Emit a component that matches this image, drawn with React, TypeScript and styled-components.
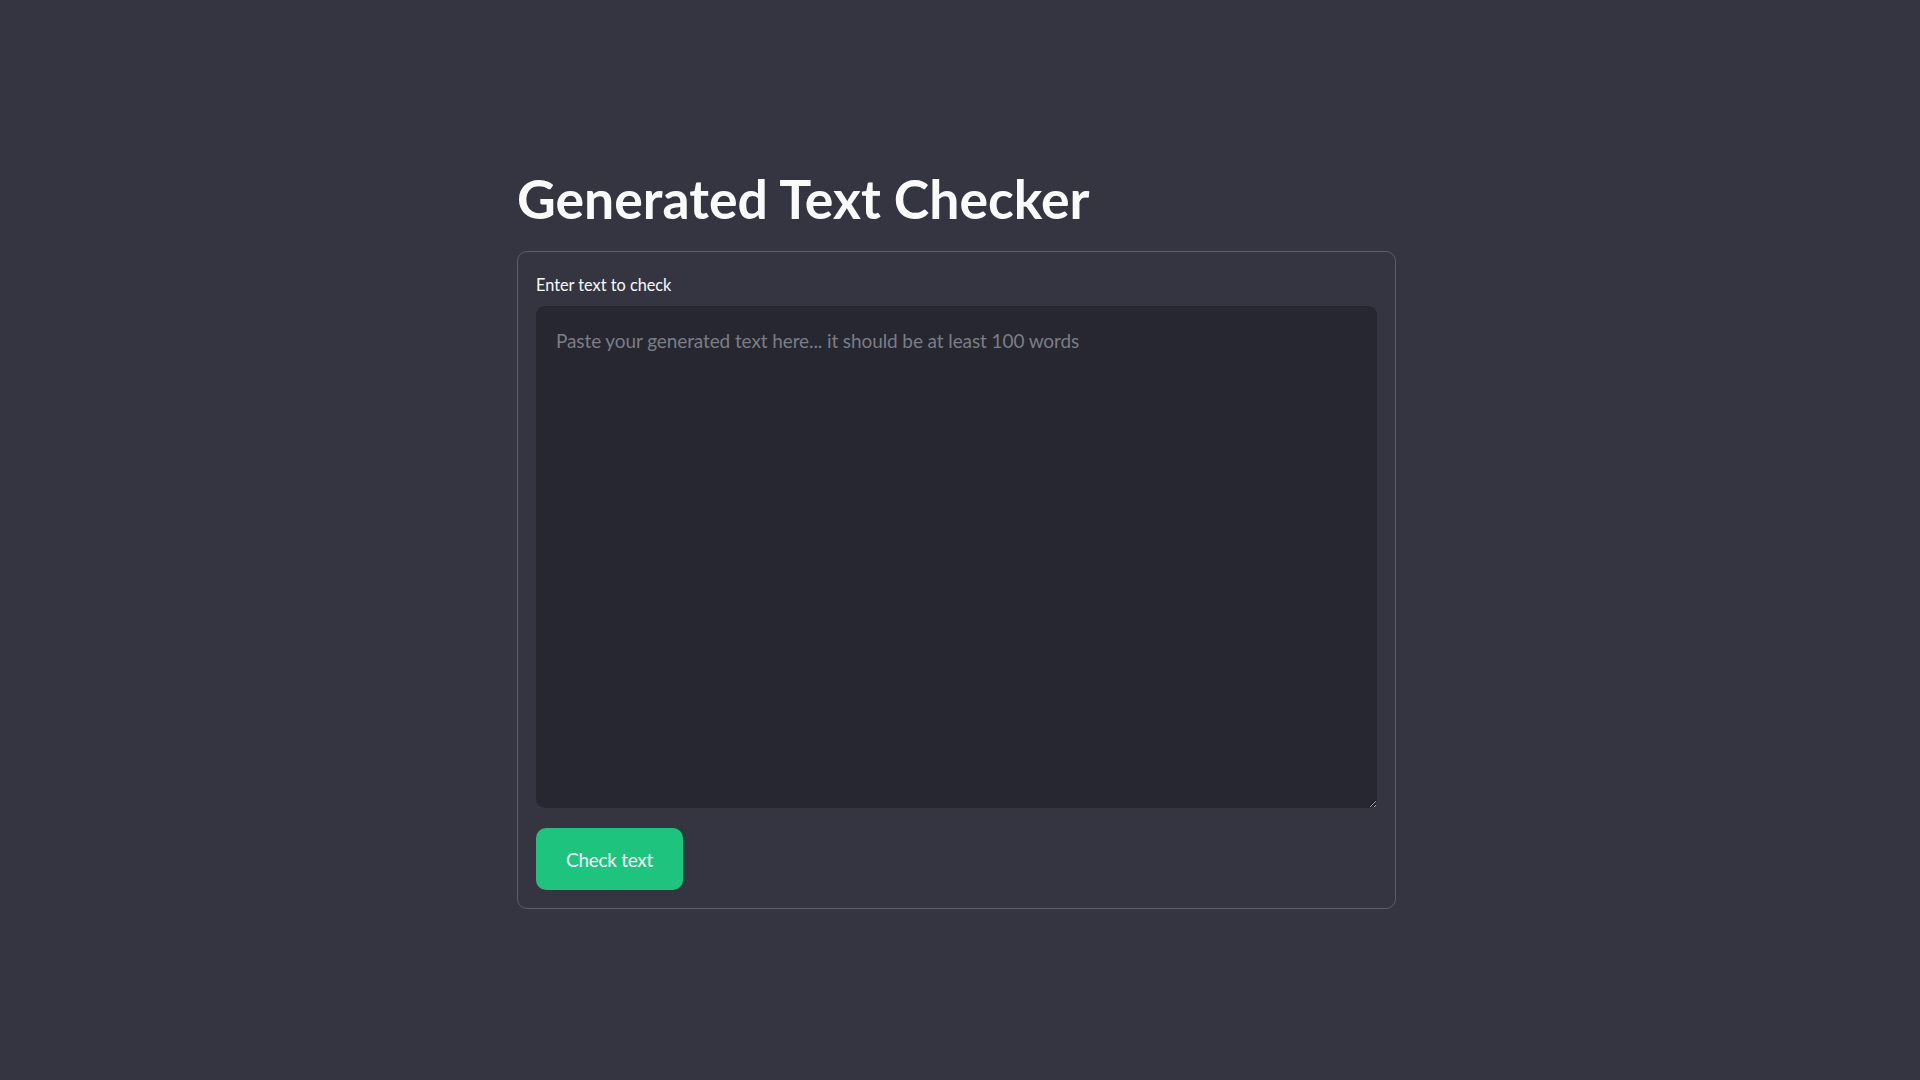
import React from "react";
import styled, { createGlobalStyle } from "styled-components";

const GlobalStyle = createGlobalStyle`
  html, body {
    margin: 0;
    padding: 0;
    background: #353541;
    min-height: 100%;
  }
  body {
    font-family: Lato, "Noto Sans", sans-serif;
    color: #fafafa;
  }
`;

const Page = styled.main`
  min-height: 1080px;
  box-sizing: border-box;
  padding-top: 162px;
`;

const Column = styled.div`
  width: 879px;
  margin-left: calc(50% - 443px);
  display: flex;
  flex-direction: column;
`;

const Title = styled.h1`
  margin: 0 0 17px 0;
  font-family: Lato, "Noto Sans", sans-serif;
  font-weight: 700;
  font-size: 53.5px;
  line-height: 72px;
  letter-spacing: 0;
  color: #fafafa;
`;

const Card = styled.form`
  box-sizing: border-box;
  border: 1px solid #5d5d69;
  border-radius: 10px;
  padding: 19px 18px 18px 18px;
  display: flex;
  flex-direction: column;
  gap: 20px;
`;

const Field = styled.div`
  display: flex;
  flex-direction: column;
  gap: 7px;
`;

const Label = styled.label`
  font-size: 16.3px;
  line-height: 28px;
  color: #fafafa;
  letter-spacing: 0;
`;

const TextArea = styled.textarea`
  box-sizing: border-box;
  width: 100%;
  height: 502px;
  border: none;
  outline: none;
  border-radius: 9px;
  background: #262730;
  color: #fafafa;
  padding: 21px 20px 18px 20px;
  font-family: Lato, "Noto Sans", sans-serif;
  font-size: 19px;
  line-height: 28px;
  resize: vertical;
  &::placeholder {
    color: #7c7d86;
    letter-spacing: -0.1px;
  }
`;

const Button = styled.button`
  align-self: flex-start;
  width: 147px;
  height: 62px;
  border: none;
  border-radius: 10px;
  background: #1ec47d;
  color: #fafafa;
  font-family: Lato, "Noto Sans", sans-serif;
  font-size: 19px;
  letter-spacing: -0.3px;
  cursor: pointer;
`;

export default function App() {
  return (
    <>
      <GlobalStyle />
      <Page>
        <Column>
          <Title>Generated Text Checker</Title>
          <Card onSubmit={(e) => e.preventDefault()}>
            <Field>
              <Label htmlFor="txt">Enter text to check</Label>
              <TextArea
                id="txt"
                placeholder="Paste your generated text here... it should be at least 100 words"
              />
            </Field>
            <Button type="submit">Check text</Button>
          </Card>
        </Column>
      </Page>
    </>
  );
}
